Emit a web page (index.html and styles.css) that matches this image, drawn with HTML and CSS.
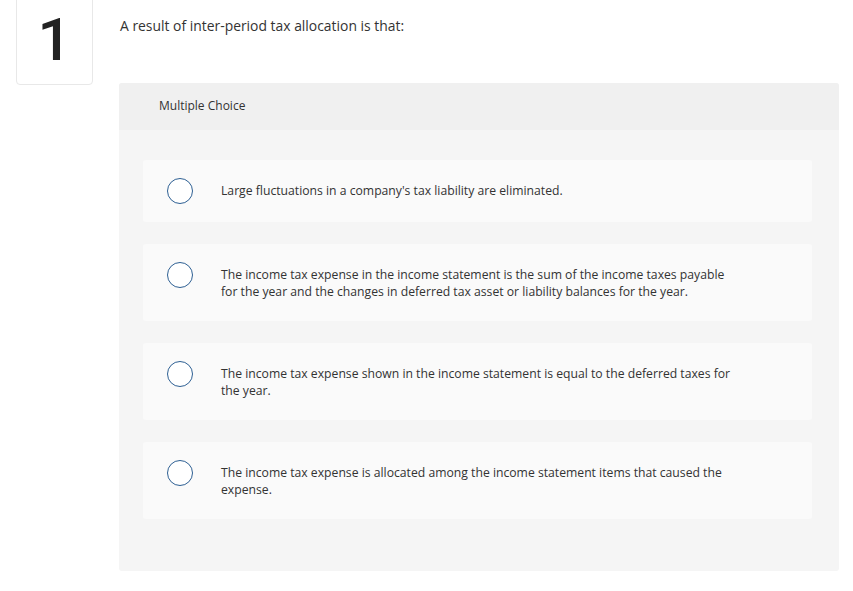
FILE: index.html
```html
<!DOCTYPE html>
<html>
<head>
<meta charset="utf-8">
<link rel="stylesheet" href="styles.css">
</head>
<body>
<div class="page">
  <div class="qnum">1</div>
  <div class="qmain">
    <p class="prompt">A result of inter-period tax allocation is that:</p>
    <div class="panel">
      <div class="panel-head">Multiple Choice</div>
      <div class="panel-body">
        <div class="opt"><span class="radio"></span><p class="opt-text">Large fluctuations in a company's tax liability are eliminated.</p></div>
        <div class="opt"><span class="radio"></span><p class="opt-text">The income tax expense in the income statement is the sum of the income taxes payable for the year and the changes in deferred tax asset or liability balances for the year.</p></div>
        <div class="opt"><span class="radio"></span><p class="opt-text">The income tax expense shown in the income statement is equal to the deferred taxes for the year.</p></div>
        <div class="opt"><span class="radio"></span><p class="opt-text">The income tax expense is allocated among the income statement items that caused the expense.</p></div>
      </div>
    </div>
  </div>
</div>
</body>
</html>
```

FILE: styles.css
```css
html, body {
  margin: 0;
  padding: 0;
  background: #ffffff;
}
body {
  font-family: "Open Sans", "Liberation Sans", sans-serif;
  color: #333333;
}
.page {
  display: flex;
  align-items: flex-start;
  padding-left: 16px;
}
.qnum {
  box-sizing: border-box;
  width: 77px;
  height: 90px;
  margin-top: -5px;
  border: 1px solid #e8e8e8;
  border-radius: 4px;
  display: flex;
  justify-content: center;
  padding-top: 9px;
  font-family: Roboto, "Liberation Sans", sans-serif;
  font-weight: 500;
  font-size: 60px;
  line-height: 70px;
  color: #222222;
}
.qmain {
  margin-left: 26px;
  width: 720px;
}
.prompt {
  margin: 16px 0 0 1px;
  font-size: 13.9px;
  line-height: 19px;
  color: #333333;
}
.panel {
  margin-top: 48px;
  background: #f5f5f5;
  border-radius: 3px;
}
.panel-head {
  height: 47px;
  box-sizing: border-box;
  background: #f0f0f0;
  border-radius: 3px 3px 0 0;
  padding: 15px 0 0 40px;
  font-size: 12px;
  line-height: 16px;
  color: #333333;
}
.panel-body {
  padding: 30px 27px 52px 24px;
  display: flex;
  flex-direction: column;
  gap: 22px;
}
.opt {
  background: #fafafa;
  border-radius: 3px;
  display: flex;
  align-items: flex-start;
  padding: 22px 70px 21px 24px;
  min-height: 19px;
}
.radio {
  flex: none;
  box-sizing: border-box;
  width: 26px;
  height: 26px;
  border: 1.5px solid #2d5f93;
  border-radius: 50%;
  background: #ffffff;
  margin: -4px 0 -5px 0;
}
.opt-text {
  margin: 0 0 0 28px;
  font-size: 12.2px;
  line-height: 17px;
  color: #333333;
}
```
